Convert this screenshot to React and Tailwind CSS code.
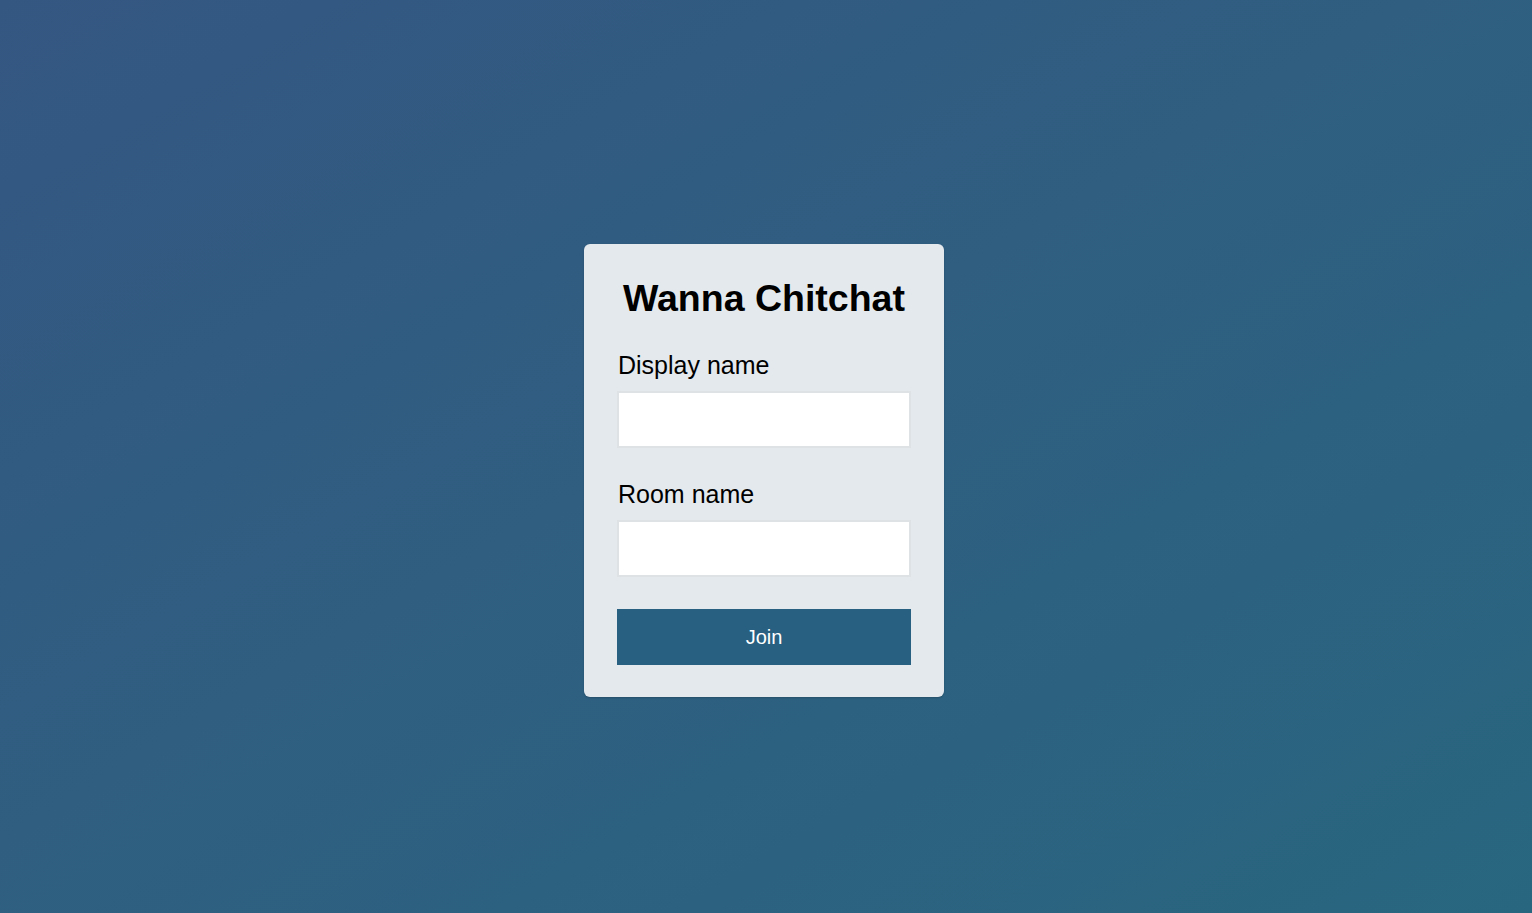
export default function App() {
  return (
    <div
      className="min-h-screen w-full bg-linear-to-br from-[#345782] to-[#28667f] flex justify-center items-start pt-[244px] pr-[4px]"
      style={{ fontFamily: '"Liberation Sans", Arial, sans-serif' }}
    >
      <div className="w-[360px] rounded-[6px] bg-[#e4e9ee] px-[33px] pt-[32px] pb-[32px] shadow-[0_1px_2px_rgba(0,0,0,0.18)] flex flex-col">
        <h1 className="text-center text-[37.5px] leading-[44px] font-bold text-black">
          Wanna Chitchat
        </h1>

        <label className="mt-[31px] pl-px text-[25px] leading-[28px] text-black">Display name</label>
        <input
          type="text"
          className="mt-[12px] h-[57px] w-full bg-white border-2 border-[#dfe2e5] outline-none px-3"
        />

        <label className="mt-[32px] pl-px text-[25px] leading-[28px] text-black">Room name</label>
        <input
          type="text"
          className="mt-[12px] h-[57px] w-full bg-white border-2 border-[#dfe2e5] outline-none px-3"
        />

        <button className="mt-[32px] h-[56px] w-full bg-[#276080] text-white text-[20px]">
          Join
        </button>
      </div>
    </div>
  );
}
